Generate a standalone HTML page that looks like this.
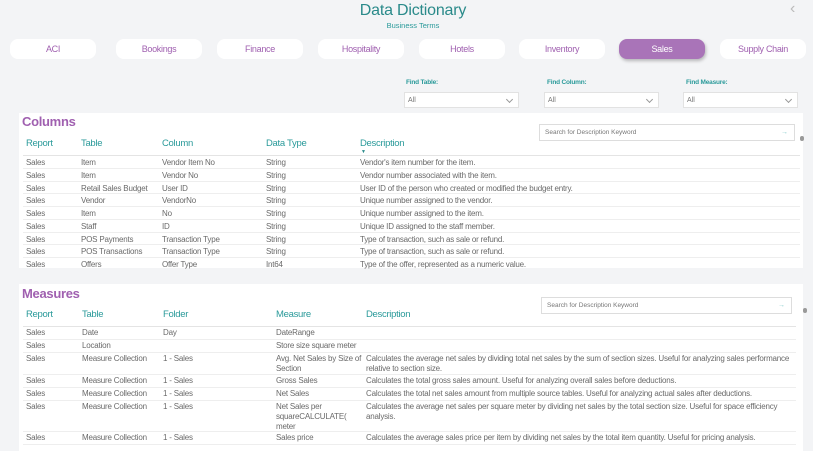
<!DOCTYPE html>
<html><head><meta charset="utf-8"><style>
*{margin:0;padding:0;box-sizing:border-box}
body{width:813px;height:451px;background:#f3f4f6;font-family:"Liberation Sans",sans-serif;position:relative;overflow:hidden;color:#666}
.a{position:absolute;white-space:nowrap}
.t{font-size:8px;letter-spacing:-0.2px;color:#6a6a6a}
.h{font-size:9.5px;letter-spacing:-0.3px;color:#2a9a9a}
.tab{position:absolute;top:39px;width:86px;height:20px;background:#fff;border-radius:8px;font-size:9px;letter-spacing:-0.3px;color:#a060b0;text-align:center;line-height:20px}
.dd{position:absolute;top:92px;height:16px;background:#fff;border:1px solid #e2e2e2;font-size:7px;color:#777;padding-left:3px;line-height:15px}
.dd:after{content:"";position:absolute;right:6px;top:4px;width:4px;height:4px;border-right:1px solid #999;border-bottom:1px solid #999;transform:rotate(45deg)}
.lbl{position:absolute;top:79px;font-size:6.5px;color:#2a9a9a;font-weight:bold;letter-spacing:-0.2px}
.panel{position:absolute;left:19px;width:784px;background:#fff}
.line{position:absolute;height:1px;background:#eee}
.sb{position:absolute;height:17px;background:#fff;border:1px solid #ddd;font-size:6.5px;color:#777;padding-left:5px;line-height:15px}
.sb span{position:absolute;right:6px;color:#8cc;font-size:7px}
.ttl{position:absolute;font-size:13px;font-weight:bold;color:#a060b0;letter-spacing:-0.3px}
</style></head><body>
<div class="a" style="left:0;width:826px;top:2px;text-align:center;font-size:16px;color:#2a8a8a;letter-spacing:-0.2px">Data Dictionary</div>
<div class="a" style="left:0;width:826px;top:21px;text-align:center;font-size:7.5px;color:#2a9a9a">Business Terms</div>
<div class="a" style="left:790px;top:0px;font-size:16px;color:#bbb">&#8249;</div>
<div class="tab" style="left:10px">ACI</div>
<div class="tab" style="left:116px">Bookings</div>
<div class="tab" style="left:217px">Finance</div>
<div class="tab" style="left:318px">Hospitality</div>
<div class="tab" style="left:419px">Hotels</div>
<div class="tab" style="left:519px">Inventory</div>
<div class="tab" style="left:619px;background:#a974b8;color:#fff;box-shadow:1px 2px 3px rgba(0,0,0,.25)">Sales</div>
<div class="tab" style="left:720px">Supply Chain</div>
<div class="lbl" style="left:406px">Find Table:</div>
<div class="lbl" style="left:547px">Find Column:</div>
<div class="lbl" style="left:686px">Find Measure:</div>
<div class="dd" style="left:404px;width:115px">All</div>
<div class="dd" style="left:544px;width:115px">All</div>
<div class="dd" style="left:683px;width:115px">All</div>

<div class="panel" style="top:113px;height:155px"></div>
<div class="ttl" style="left:22px;top:114px">Columns</div>
<div class="sb" style="left:539px;top:124px;width:256px">Search for Description Keyword<span>&#8594;</span></div>
<div class="a" style="left:800px;top:136px;width:4px;height:5px;border-radius:2px;background:#999"></div>
<div class="a h" style="left:26px;top:138px">Report</div>
<div class="a h" style="left:81px;top:138px">Table</div>
<div class="a h" style="left:162px;top:138px">Column</div>
<div class="a h" style="left:266px;top:138px">Data Type</div>
<div class="a h" style="left:360px;top:138px">Description</div>
<div class="a" style="left:361px;top:149px;font-size:5px;color:#2a8a8a">&#9660;</div>
<div class="line" style="left:23px;width:777px;top:155px;background:#e4e4e4"></div>

<div class="a t" style="left:26px;top:157px;line-height:12.75px">Sales<br>Sales<br>Sales<br>Sales<br>Sales<br>Sales<br>Sales<br>Sales<br>Sales</div>
<div class="a t" style="left:81px;top:157px;line-height:12.75px">Item<br>Item<br>Retail Sales Budget<br>Vendor<br>Item<br>Staff<br>POS Payments<br>POS Transactions<br>Offers</div>
<div class="a t" style="left:162px;top:157px;line-height:12.75px">Vendor Item No<br>Vendor No<br>User ID<br>VendorNo<br>No<br>ID<br>Transaction Type<br>Transaction Type<br>Offer Type</div>
<div class="a t" style="left:266px;top:157px;line-height:12.75px">String<br>String<br>String<br>String<br>String<br>String<br>String<br>String<br>Int64</div>
<div class="a t" style="left:360px;top:157px;line-height:12.75px">Vendor's item number for the item.<br>Vendor number associated with the item.<br>User ID of the person who created or modified the budget entry.<br>Unique number assigned to the vendor.<br>Unique number assigned to the item.<br>Unique ID assigned to the staff member.<br>Type of transaction, such as sale or refund.<br>Type of transaction, such as sale or refund.<br>Type of the offer, represented as a numeric value.</div>
<div class="line" style="left:23px;width:777px;top:168px"></div>
<div class="line" style="left:23px;width:777px;top:181px"></div>
<div class="line" style="left:23px;width:777px;top:193px"></div>
<div class="line" style="left:23px;width:777px;top:206px"></div>
<div class="line" style="left:23px;width:777px;top:219px"></div>
<div class="line" style="left:23px;width:777px;top:232px"></div>
<div class="line" style="left:23px;width:777px;top:244px"></div>
<div class="line" style="left:23px;width:777px;top:257px"></div>

<div class="panel" style="top:284px;height:167px"></div>
<div class="ttl" style="left:22px;top:286px">Measures</div>
<div class="sb" style="left:541px;top:297px;width:251px">Search for Description Keyword<span>&#8594;</span></div>
<div class="a" style="left:803px;top:308px;width:4px;height:5px;border-radius:2px;background:#999"></div>
<div class="a h" style="left:26px;top:309px">Report</div>
<div class="a h" style="left:82px;top:309px">Table</div>
<div class="a h" style="left:163px;top:309px">Folder</div>
<div class="a h" style="left:276px;top:309px">Measure</div>
<div class="a h" style="left:366px;top:309px">Description</div>
<div class="line" style="left:23px;width:773px;top:326px;background:#e4e4e4"></div>

<div class="a t" style="left:26px;top:328px;line-height:10px">Sales</div>
<div class="a t" style="left:82px;top:328px;line-height:10px">Date</div>
<div class="a t" style="left:163px;top:328px;line-height:10px">Day</div>
<div class="a t" style="left:276px;top:328px;line-height:10px">DateRange</div>
<div class="line" style="left:23px;width:773px;top:339px"></div>
<div class="a t" style="left:26px;top:341px;line-height:10px">Sales</div>
<div class="a t" style="left:82px;top:341px;line-height:10px">Location</div>
<div class="a t" style="left:276px;top:341px;line-height:10px">Store size square meter</div>
<div class="line" style="left:23px;width:773px;top:352px"></div>
<div class="a t" style="left:26px;top:354px;line-height:10px">Sales</div>
<div class="a t" style="left:82px;top:354px;line-height:10px">Measure Collection</div>
<div class="a t" style="left:163px;top:354px;line-height:10px">1 - Sales</div>
<div class="a t" style="left:276px;top:354px;line-height:10px">Avg. Net Sales by Size of<br>Section</div>
<div class="a t" style="left:366px;top:354px;line-height:10px">Calculates the average net sales by dividing total net sales by the sum of section sizes. Useful for analyzing sales performance<br>relative to section size.</div>
<div class="line" style="left:23px;width:773px;top:374px"></div>
<div class="a t" style="left:26px;top:376px;line-height:10px">Sales</div>
<div class="a t" style="left:82px;top:376px;line-height:10px">Measure Collection</div>
<div class="a t" style="left:163px;top:376px;line-height:10px">1 - Sales</div>
<div class="a t" style="left:276px;top:376px;line-height:10px">Gross Sales</div>
<div class="a t" style="left:366px;top:376px;line-height:10px">Calculates the total gross sales amount. Useful for analyzing overall sales before deductions.</div>
<div class="line" style="left:23px;width:773px;top:387px"></div>
<div class="a t" style="left:26px;top:389px;line-height:10px">Sales</div>
<div class="a t" style="left:82px;top:389px;line-height:10px">Measure Collection</div>
<div class="a t" style="left:163px;top:389px;line-height:10px">1 - Sales</div>
<div class="a t" style="left:276px;top:389px;line-height:10px">Net Sales</div>
<div class="a t" style="left:366px;top:389px;line-height:10px">Calculates the total net sales amount from multiple source tables. Useful for analyzing actual sales after deductions.</div>
<div class="line" style="left:23px;width:773px;top:400px"></div>
<div class="a t" style="left:26px;top:402px;line-height:10px">Sales</div>
<div class="a t" style="left:82px;top:402px;line-height:10px">Measure Collection</div>
<div class="a t" style="left:163px;top:402px;line-height:10px">1 - Sales</div>
<div class="a t" style="left:276px;top:402px;line-height:10px">Net Sales per<br>squareCALCULATE(<br>meter</div>
<div class="a t" style="left:366px;top:402px;line-height:10px">Calculates the average net sales per square meter by dividing net sales by the total section size. Useful for space efficiency<br>analysis.</div>
<div class="line" style="left:23px;width:773px;top:431px"></div>
<div class="a t" style="left:26px;top:433px;line-height:10px">Sales</div>
<div class="a t" style="left:82px;top:433px;line-height:10px">Measure Collection</div>
<div class="a t" style="left:163px;top:433px;line-height:10px">1 - Sales</div>
<div class="a t" style="left:276px;top:433px;line-height:10px">Sales price</div>
<div class="a t" style="left:366px;top:433px;line-height:10px">Calculates the average sales price per item by dividing net sales by the total item quantity. Useful for pricing analysis.</div>
<div class="line" style="left:23px;width:773px;top:444px"></div>
</body></html>
